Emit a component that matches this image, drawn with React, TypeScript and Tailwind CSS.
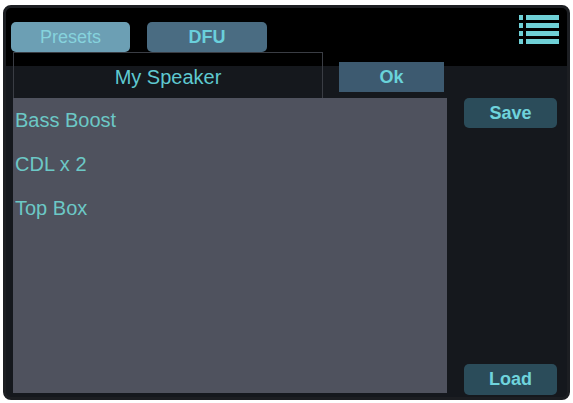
import React from "react";

function MenuIcon() {
  return (
    <svg width="40" height="31" viewBox="0 0 40 31" className="block">
      {[0, 8, 16, 24].map((y) => (
        <g key={y} fill="#6fd0d6">
          <rect x="0" y={y} width="4" height="5" />
          <rect x="7" y={y} width="33" height="5" />
        </g>
      ))}
    </svg>
  );
}

export default function App() {
  const items = ["Bass Boost", "CDL x 2", "Top Box"];
  return (
    <div
      className="w-[573px] h-[403px] bg-white pt-[5px] pl-[3px]"
      style={{ fontFamily: '"Liberation Sans", Arial, sans-serif' }}
    >
      <div className="w-[567px] h-[395px] rounded-[8px] border-[3px] border-[#1c1e22] bg-[linear-gradient(to_bottom,#000_58px,#15181d_58px)] flex flex-col overflow-hidden">
        {/* header */}
        <div className="h-[44px] flex items-start shrink-0">
          <div className="flex gap-[17px] mt-[14px] ml-[5px]">
            <div className="w-[119px] h-[30px] rounded-[5px] bg-[#6c9fb4] text-[#86d3dd] text-[18px] flex items-center justify-center">
              Presets
            </div>
            <div className="w-[120px] h-[30px] rounded-[5px] bg-[#4a6c82] text-[#6ad0dc] text-[18px] font-bold flex items-center justify-center">
              DFU
            </div>
          </div>
          <div className="ml-auto mt-[7px] mr-[8px]">
            <MenuIcon />
          </div>
        </div>
        {/* tab row */}
        <div className="h-[46px] flex items-start shrink-0">
          <div className="ml-[7px] w-[310px] h-[46px] border border-b-0 border-[#3a3d44] text-[#5fc9d0] text-[20px] flex items-center justify-center pt-[3px]">
            My Speaker
          </div>
          <div className="ml-[16px] mt-[10px] w-[105px] h-[30px] bg-[#3d5a70] text-[#6ad3da] text-[18px] font-bold flex items-center justify-center">
            Ok
          </div>
        </div>
        {/* main */}
        <div className="flex-1 flex">
          <div className="ml-[7px] w-[434px] mb-[4px] bg-[#4f525e] pl-[2px]">
            {items.map((t) => (
              <div key={t} className="h-[44px] leading-[44px] text-[20px] text-[#6cc8c6]">
                {t}
              </div>
            ))}
          </div>
          <div className="ml-[17px] w-[93px] flex flex-col justify-between pb-[2px]">
            <div className="h-[30px] rounded-[5px] bg-[#2b4c5a] text-[#6fd3dc] text-[18px] font-bold flex items-center justify-center pt-[1px]">
              Save
            </div>
            <div className="h-[31px] rounded-[5px] bg-[#2b4c5a] text-[#6fd3dc] text-[18px] font-bold flex items-center justify-center">
              Load
            </div>
          </div>
        </div>
      </div>
    </div>
  );
}
